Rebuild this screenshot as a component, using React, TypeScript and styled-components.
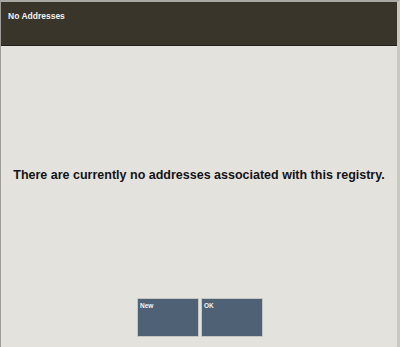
import styled, { createGlobalStyle } from 'styled-components';

const GlobalStyle = createGlobalStyle`
  html, body {
    margin: 0;
    padding: 0;
    background: #e3e2dd;
  }
  body {
    font-family: "Liberation Sans", Arial, sans-serif;
  }
`;

const Frame = styled.div`
  width: 400px;
  height: 347px;
  box-sizing: border-box;
  border-top: 2px solid #a9a8a2;
  border-left: 1px solid #9d9c96;
  border-right: 3px solid #c9c8c1;
  background: #e3e2dd;
  display: flex;
  flex-direction: column;
`;

const Header = styled.div`
  height: 44px;
  background: #39352b;
  border-bottom: 1px solid #23211b;
  box-sizing: border-box;
  padding: 9px 7px;
  color: #f2f2ee;
  font-size: 8.5px;
  font-weight: bold;
`;

const Body = styled.div`
  flex: 1;
  display: flex;
  flex-direction: column;
  align-items: center;
`;

const Message = styled.div`
  margin-top: 122px;
  font-size: 12.5px;
  font-weight: bold;
  color: #141414;
  text-align: center;
`;

const Actions = styled.div`
  margin-top: auto;
  margin-bottom: 10px;
  padding-left: 2px;
  display: flex;
  gap: 2px;
`;

const Button = styled.button`
  width: 62px;
  height: 39px;
  box-sizing: border-box;
  background: #4f6275;
  border: 1px solid #c5c6c2;
  color: #f4f4f4;
  font-family: "Liberation Sans", Arial, sans-serif;
  font-size: 6.5px;
  font-weight: bold;
  text-align: left;
  padding: 3px 2px;
  display: flex;
  align-items: flex-start;
`;

export default function App() {
  return (
    <>
      <GlobalStyle />
      <Frame>
        <Header>No Addresses</Header>
        <Body>
          <Message>There are currently no addresses associated with this registry.</Message>
          <Actions>
            <Button>New</Button>
            <Button>OK</Button>
          </Actions>
        </Body>
      </Frame>
    </>
  );
}
